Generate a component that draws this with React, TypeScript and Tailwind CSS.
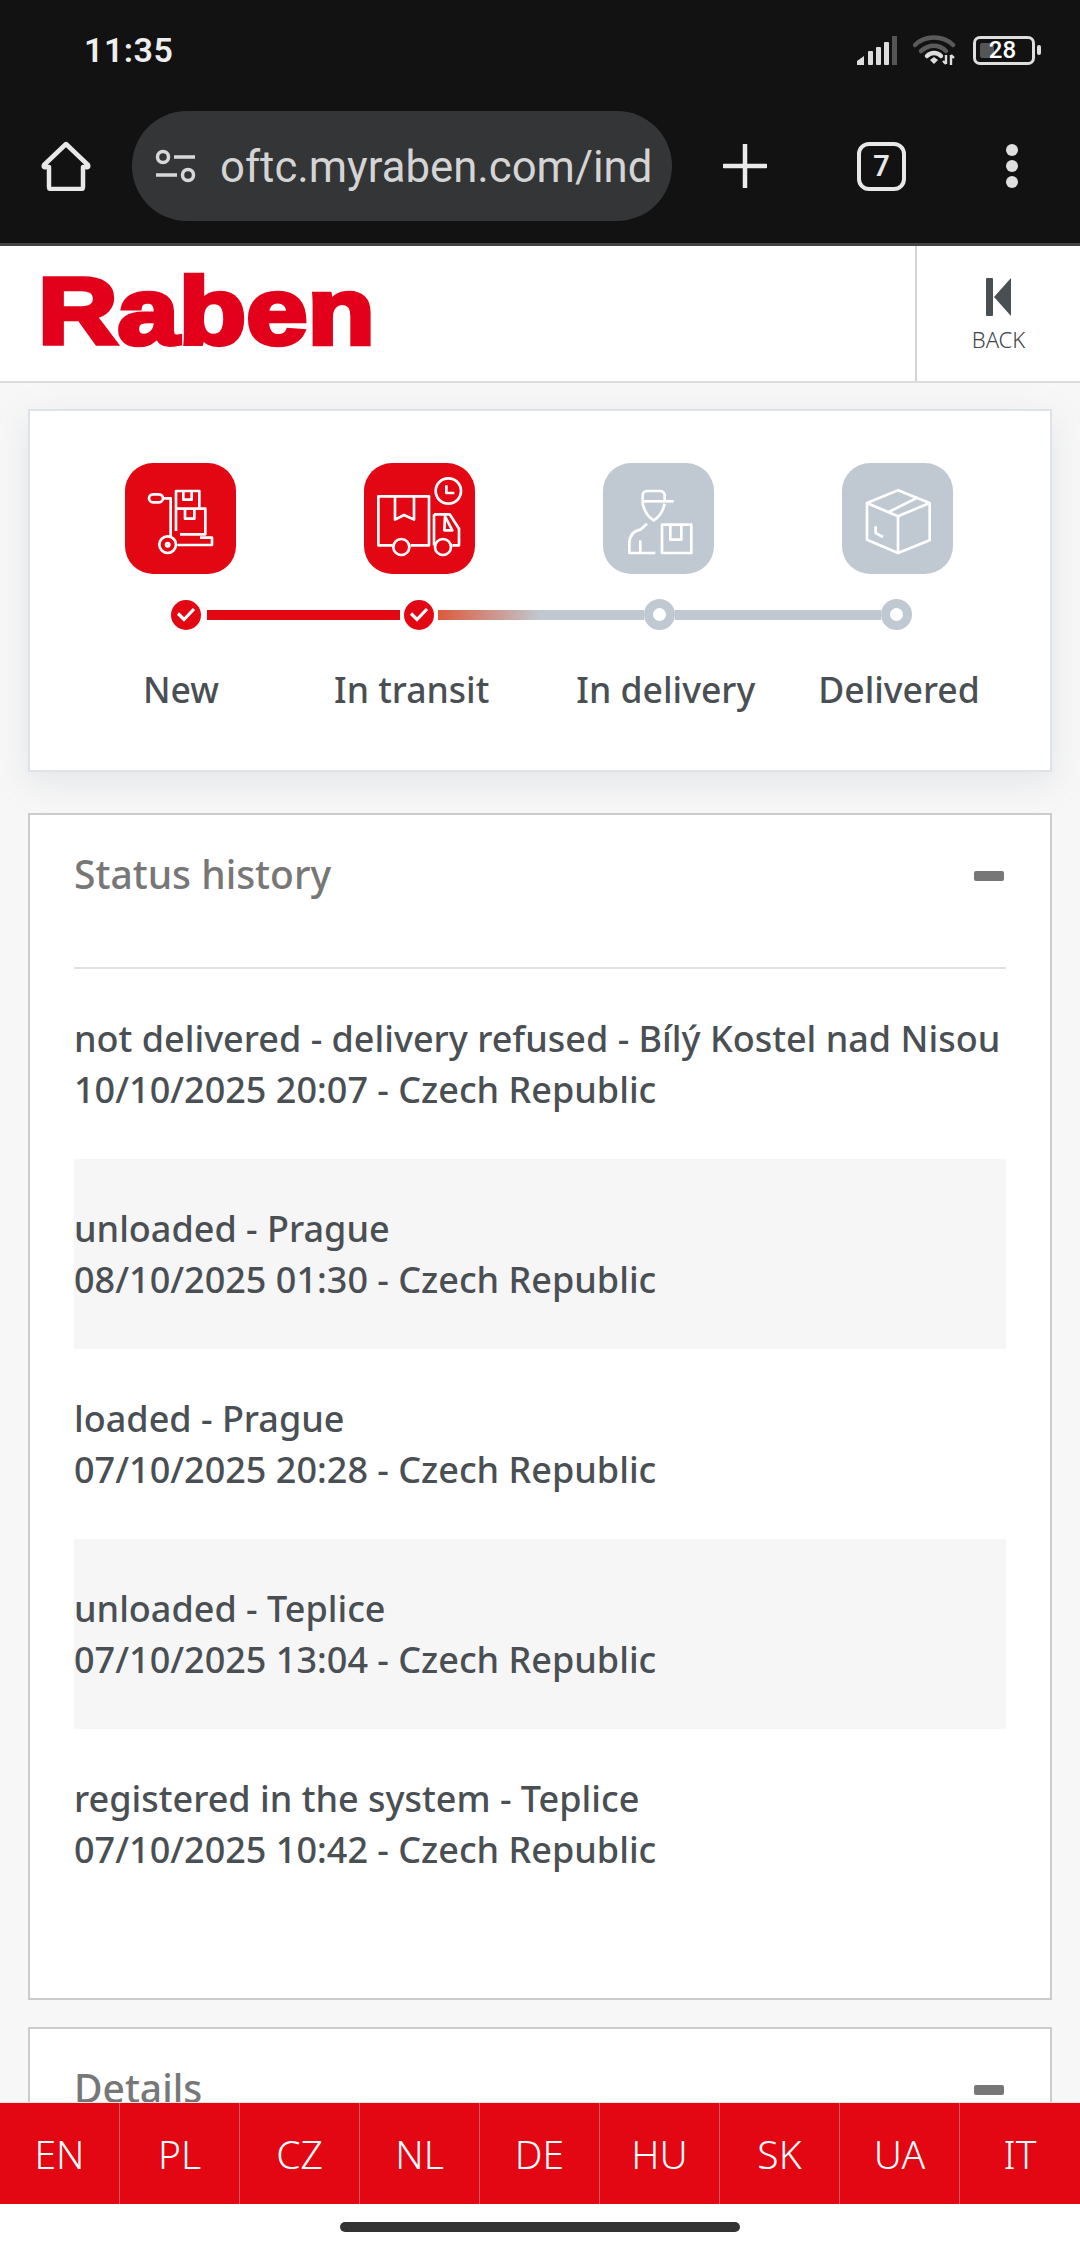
import React from "react";

const rows = [
  ["not delivered - delivery refused - Bílý Kostel nad Nisou", "10/10/2025 20:07 - Czech Republic", false],
  ["unloaded - Prague", "08/10/2025 01:30 - Czech Republic", true],
  ["loaded - Prague", "07/10/2025 20:28 - Czech Republic", false],
  ["unloaded - Teplice", "07/10/2025 13:04 - Czech Republic", true],
  ["registered in the system - Teplice", "07/10/2025 10:42 - Czech Republic", false],
] as const;

const langs = ["EN", "PL", "CZ", "NL", "DE", "HU", "SK", "UA", "IT"];

function Signal() {
  return (
    <svg width="40" height="29" viewBox="0 0 40 29" className="block">
      <path d="M0 29v-4l7-5v9z" fill="#dedede" />
      <rect x="11" y="15" width="5" height="14" rx="1" fill="#dedede" />
      <rect x="19" y="11" width="5" height="18" rx="1" fill="#dedede" />
      <rect x="27" y="6" width="5" height="23" rx="1" fill="#dedede" />
      <rect x="35" y="0" width="5" height="29" fill="#555" />
    </svg>
  );
}

function Wifi() {
  return (
    <svg width="44" height="32" viewBox="0 0 44 32" fill="none" className="block">
      <path d="M2 11C12 1 30 1 40 11" stroke="#5a5a5a" strokeWidth="4.5" strokeLinecap="round" />
      <path d="M8 17c8-7 18-7 25 0" stroke="#5a5a5a" strokeWidth="4.5" strokeLinecap="round" />
      <path d="M14 22c4-4 10-4 14 0" stroke="#dedede" strokeWidth="4.5" strokeLinecap="round" />
      <path d="M17 26l4-3 4 3-4 4z" fill="#dedede" />
      <path d="M33 21v9M33 30l-3-3M38 31v-10M38 21l3 3" stroke="#dedede" strokeWidth="2.4" />
    </svg>
  );
}

function Battery() {
  return (
    <div className="flex items-center gap-[2px]">
      <div className="relative flex h-[29px] w-[62px] items-center justify-center rounded-[7px] border-[3px] border-[#dedede] pr-[3px]">
        <div className="absolute left-[4px] top-[4px] h-[15px] w-[14px] rounded-[2px] bg-[#555]" />
        <span className="relative font-['Roboto',sans-serif] text-[24px] font-medium leading-none text-white">28</span>
      </div>
      <div className="h-[10px] w-[4px] rounded-[2px] bg-[#dedede]" />
    </div>
  );
}

function HomeIcon() {
  return (
    <svg width="50" height="50" viewBox="0 0 50 50" fill="none" className="block">
      <path d="M25 3 L47 24 Q48 27 45 26 H42 V46 Q42 48 40 48 H10 Q8 48 8 46 V26 H5 Q2 27 3 24 Z" stroke="#e8e8e8" strokeWidth="4.5" strokeLinejoin="round" />
    </svg>
  );
}

function TuneIcon() {
  return (
    <svg width="42" height="34" viewBox="0 0 42 34" fill="none" className="block">
      <circle cx="8" cy="8" r="5.5" stroke="#d8d8d8" strokeWidth="3.5" />
      <path d="M19 8h21M1 26h21" stroke="#d8d8d8" strokeWidth="3.5" />
      <circle cx="33" cy="26" r="5.5" stroke="#d8d8d8" strokeWidth="3.5" />
    </svg>
  );
}

const art = { fill: "none", stroke: "#fff", strokeWidth: 8, strokeLinejoin: "round" as const, width: 111, height: 111, className: "block" };

function Trolley() {
  return (
    <svg viewBox="75 68 333 333" {...art}>
      <rect x="147" y="162" width="42" height="24" rx="12" />
      <path d="M189 174H212V292" />
      <path d="M228 205V152H298V205" />
      <path d="M250 152V178H275V152" />
      <path d="M228 205H316V282H240" />
      <path d="M228 205V272" />
      <path d="M255 205V235H283V205" />
      <path d="M232 314H336V292H300" />
      <circle cx="203" cy="313" r="25" />
      <circle cx="203" cy="313" r="5" />
    </svg>
  );
}

function TruckClock() {
  return (
    <svg viewBox="795 68 333 333" {...art}>
      <path d="M880 315H838V168H990V315H935" />
      <path d="M888 168V238L915 224L945 238V168" />
      <path d="M1005 222H1052L1080 265V315H1060" />
      <path d="M1005 222V315" />
      <path d="M1038 228L1060 270H1036Z" />
      <circle cx="907" cy="320" r="24" />
      <circle cx="1032" cy="320" r="24" />
      <circle cx="1048" cy="152" r="38" />
      <path d="M1042 135V158H1066" />
    </svg>
  );
}

function Courier() {
  return (
    <svg viewBox="313 68 333 333" {...art}>
      <path d="M432 190V165Q432 152 448 152H482Q498 152 498 165V183" />
      <path d="M432 183H525" />
      <path d="M432 190Q440 225 465 240Q490 225 498 190" />
      <path d="M445 250L425 268Q392 275 392 310V338H470" />
      <path d="M425 300V338" />
      <rect x="490" y="253" width="88" height="85" />
      <path d="M515 253V298H548V253" />
    </svg>
  );
}

function BoxIcon() {
  return (
    <svg viewBox="1032 68 333 333" {...art}>
      <path d="M1200 150L1295 188V300L1200 338L1107 298V188Z" />
      <path d="M1107 188L1200 228L1295 188M1200 228V338" />
      <path d="M1172 215L1258 172" />
      <path d="M1133 258V278L1155 290" />
    </svg>
  );
}

function Check() {
  return (
    <div className="flex h-[30px] w-[30px] shrink-0 items-center justify-center rounded-full bg-[#e30613]">
      <svg width="20" height="15" viewBox="0 0 20 15" fill="none">
        <path d="M2 6.5L8 12.5L18 2" stroke="#fff" strokeWidth="3.2" />
      </svg>
    </div>
  );
}

function Ring() {
  return <div className="h-[31px] w-[31px] shrink-0 rounded-full border-[9px] border-[#c0c9d1] bg-white" />;
}

function Tile({ on, children }: { on?: boolean; children: React.ReactNode }) {
  return (
    <div className={`flex h-[111px] w-[111px] items-center justify-center rounded-[28px] ${on ? "bg-[#e30613]" : "bg-[#c0c9d1]"}`}>
      {children}
    </div>
  );
}

function Minus() {
  return <div className="h-[10px] w-[30px] rounded-[2px] bg-[#777]" />;
}

export default function App() {
  return (
    <div className="flex h-[2248px] w-[1080px] flex-col overflow-hidden bg-white font-['Noto_Sans',sans-serif]">
      {/* system + browser chrome */}
      <div className="flex h-[246px] shrink-0 flex-col border-b-[3px] border-[#444] bg-[#121212]">
        <div className="flex h-[100px] shrink-0 items-center justify-between pl-[84px] pr-[39px]">
          <span className="font-['Roboto',sans-serif] text-[34px] font-semibold leading-none tracking-[0.5px] text-[#eee]">11:35</span>
          <div className="flex items-center gap-[16px]">
            <Signal />
            <Wifi />
            <Battery />
          </div>
        </div>
        <div className="flex h-[110px] items-center pl-[41px] pt-[22px]">
          <HomeIcon />
          <div className="ml-[41px] flex h-[110px] w-[540px] items-center overflow-hidden rounded-[55px] bg-[#343537] pl-[23px]">
            <TuneIcon />
            <span className="ml-[23px] whitespace-nowrap pt-[3px] font-['Roboto',sans-serif] text-[43.7px] leading-none text-[#d4d4d4]">oftc.myraben.com/ind</span>
          </div>
          <svg width="44" height="44" viewBox="0 0 44 44" className="ml-[51px] block" fill="none">
            <path d="M22 1v42M1 22h42" stroke="#eaeaea" strokeWidth="4.5" strokeLinecap="round" />
          </svg>
          <div className="ml-[90px] flex h-[49px] w-[49px] items-center justify-center rounded-[12px] border-[4.5px] border-[#e8e8e8] font-['Roboto',sans-serif] text-[29px] font-semibold leading-none text-[#e8e8e8]">7</div>
          <div className="ml-[100px] flex flex-col gap-[4px]">
            <div className="h-[12px] w-[12px] rounded-full bg-[#e0e0e0]" />
            <div className="h-[12px] w-[12px] rounded-full bg-[#e0e0e0]" />
            <div className="h-[12px] w-[12px] rounded-full bg-[#e0e0e0]" />
          </div>
        </div>
      </div>

      {/* site header */}
      <div className="flex h-[137px] shrink-0 items-center justify-between border-b-2 border-[#dcdcdc] bg-white">
        <span className="mb-[4px] ml-[38px] origin-left scale-x-[1.16] font-['Liberation_Sans',sans-serif] text-[95px] font-bold leading-none text-[#e2001a] [-webkit-text-stroke:4.5px_#e2001a]">Raben</span>
        <div className="flex h-full w-[165px] flex-col items-center border-l-2 border-[#d4d4d4] pt-[32px]">
          <svg width="25" height="38" viewBox="0 0 25 38" className="block">
            <rect x="0" y="0" width="7" height="38" rx="1" fill="#4a4f54" />
            <path d="M25 0V38L8 19Z" fill="#4a4f54" />
          </svg>
          <span className="mt-[10px] text-[22px] font-light leading-[26px] text-[#3f4448]">BACK</span>
        </div>
      </div>

      {/* scroll area */}
      <main className="min-h-0 flex-1 overflow-hidden bg-[#f7f7f7] px-[28px] pt-[26px]">
        <section className="h-[363px] border-2 border-[#dfe2e6] bg-white pl-[95px] pt-[52px] shadow-[0_10px_30px_rgba(160,170,180,0.22)]">
          <div className="flex gap-[128px]">
            <Tile on><Trolley /></Tile>
            <Tile on><TruckClock /></Tile>
            <Tile><Courier /></Tile>
            <Tile><BoxIcon /></Tile>
          </div>
          <div className="ml-[46px] mt-[25px] flex items-center">
            <Check />
            <div className="ml-[6px] h-[10px] w-[193px] bg-[#e30613]" />
            <div className="ml-[4px]"><Check /></div>
            <div className="ml-[4px] h-[10px] w-[206px] bg-[linear-gradient(90deg,#dc5a3c_0%,#c0c9d1_50%)]" />
            <Ring />
            <div className="h-[10px] w-[206px] bg-[#c0c9d1]" />
            <Ring />
          </div>
          <div className="-ml-[95px] mt-[36px] flex pl-[113px] text-[35.6px] font-medium leading-[46px] text-[#4a4f54]">
            <span>New</span>
            <span className="ml-[115px]">In transit</span>
            <span className="ml-[87px]">In delivery</span>
            <span className="ml-[63px]">Delivered</span>
          </div>
        </section>

        <section className="mt-[41px] h-[1187px] border-2 border-[#cccccc] bg-white px-[44px]">
          <div className="flex h-[154px] items-start justify-between border-b-2 border-[#e0e1e3] pt-[36px]">
            <h2 className="text-[39px] font-medium leading-[46px] text-[#777]">Status history</h2>
            <div className="mr-[2px] mt-[20px]"><Minus /></div>
          </div>
          {rows.map(([a, b, shaded]) => (
            <div key={b} className={`flex h-[190px] flex-col justify-center pb-[1px] text-[36px] font-medium leading-[51px] text-[#4a4f54] ${shaded ? "bg-[#f6f6f6]" : ""}`}>
              <div className="whitespace-nowrap">{a}</div>
              <div className="whitespace-nowrap">{b}</div>
            </div>
          ))}
        </section>

        <section className="mt-[27px] h-[300px] border-2 border-[#cccccc] bg-white px-[44px]">
          <div className="flex items-start justify-between pt-[36px]">
            <h2 className="text-[39px] font-medium leading-[46px] text-[#777]">Details</h2>
            <div className="mr-[2px] mt-[20px]"><Minus /></div>
          </div>
        </section>
      </main>

      {/* language bar */}
      <nav className="grid h-[102px] shrink-0 grid-cols-9 border-t-[1px] border-[#fbe4e6] bg-[#e30613]">
        {langs.map((l, i) => (
          <div key={l} className={`flex items-center justify-center pb-[1px] text-[39px] font-light leading-none text-white ${i < 8 ? "border-r border-[#ee5560]" : ""}`}>
            {l}
          </div>
        ))}
      </nav>

      {/* gesture bar */}
      <div className="flex h-[44px] shrink-0 justify-center bg-white pt-[18px]">
        <div className="h-[10px] w-[400px] rounded-[5px] bg-[#333]" />
      </div>
    </div>
  );
}
